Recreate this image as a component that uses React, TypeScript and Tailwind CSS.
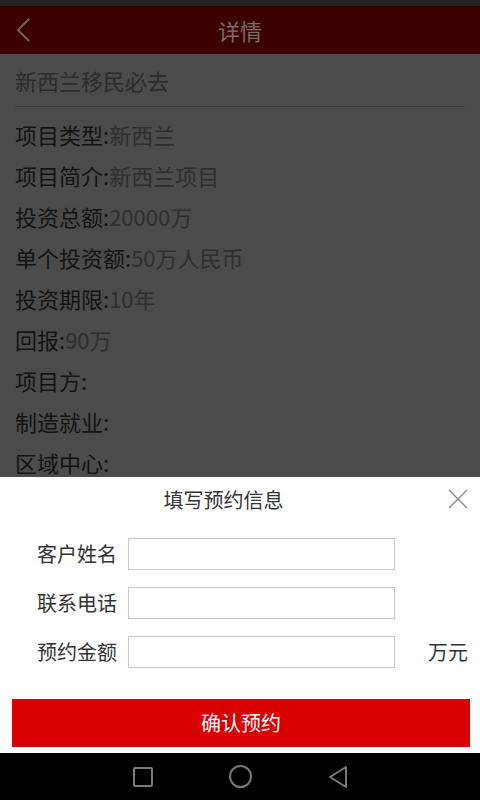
import React from 'react';

const details: { label: string; value: string }[] = [
  { label: '项目类型', value: '新西兰' },
  { label: '项目简介', value: '新西兰项目' },
  { label: '投资总额', value: '20000万' },
  { label: '单个投资额', value: '50万人民币' },
  { label: '投资期限', value: '10年' },
  { label: '回报', value: '90万' },
  { label: '项目方', value: '' },
  { label: '制造就业', value: '' },
  { label: '区域中心', value: '' },
];

const fields = [
  { label: '客户姓名', unit: '' },
  { label: '联系电话', unit: '' },
  { label: '预约金额', unit: '万元' },
];

export default function App() {
  return (
    <div
      className="w-[480px] h-[800px] flex flex-col overflow-hidden bg-white"
      style={{ fontFamily: '"Noto Sans CJK SC", "Noto Sans", sans-serif' }}
    >
      {/* status bar (dimmed) */}
      <div className="h-[6px] bg-[#232323] shrink-0" />

      {/* header (dimmed) */}
      <div className="h-[48px] shrink-0 bg-[#3d0000] flex items-center relative">
        <svg className="absolute left-[16px] top-[12px]" width="16" height="24" viewBox="0 0 16 24">
          <path d="M13 1 L2 12 L13 23" fill="none" stroke="#6f6262" strokeWidth="2" />
        </svg>
        <div className="flex-1 text-center text-[22px] text-[#7b6b6b] leading-none">详情</div>
      </div>

      {/* detail content under the mask */}
      <div className="h-[423px] shrink-0 bg-[#4b4b4b] overflow-hidden">
        <div className="h-[52px] px-[15px] flex items-center text-[22px] text-[#2c2c2c]">
          新西兰移民必去
        </div>
        <div className="mx-[15px] h-px bg-[#3a3a3a]" />
        <div className="pt-[16px] px-[15px] flex flex-col gap-[19px]">
          {details.map((d) => (
            <div key={d.label} className="h-[22px] flex items-center text-[22px] leading-none">
              <span className="text-[#131313]">{d.label}:</span>
              <span className="text-[#2f2f2f]">{d.value}</span>
            </div>
          ))}
        </div>
      </div>

      {/* dialog */}
      <div className="h-[276px] shrink-0 bg-white flex flex-col">
        <div className="h-[46px] relative flex items-center justify-center pr-[33px]">
          <span className="text-[20px] text-[#333]">填写预约信息</span>
          <svg className="absolute left-[448px] top-[12px]" width="20" height="20" viewBox="0 0 20 20">
            <path d="M1 1 L19 19 M19 1 L1 19" stroke="#8a8a8a" strokeWidth="1.4" />
          </svg>
        </div>
        <div className="pt-[15px] flex flex-col gap-[17px]">
          {fields.map((f) => (
            <div key={f.label} className="h-[32px] flex items-center pl-[37px]">
              <span className="w-[80px] text-[20px] text-[#333] leading-none">{f.label}</span>
              <input className="ml-[11px] w-[267px] h-[32px] border border-[#c8c8c8] outline-none" />
              {f.unit && (
                <span className="ml-[33px] text-[20px] text-[#333] leading-none">{f.unit}</span>
              )}
            </div>
          ))}
        </div>
        <div className="mt-[31px] px-[12px]">
          <button className="w-[458px] h-[48px] bg-[#d80000] text-white text-[20px] flex items-center justify-center">
            确认预约
          </button>
        </div>
      </div>

      {/* navigation bar */}
      <div className="flex-1 bg-black flex items-center justify-center">
        <div className="w-[480px] h-full relative">
          <div className="absolute left-[133px] top-[14px] w-[20px] h-[20px] border-2 border-[#7a7a7a] rounded-[2px]" />
          <div className="absolute left-[229px] top-[12px] w-[23px] h-[23px] border-2 border-[#7a7a7a] rounded-full" />
          <svg className="absolute left-[327px] top-[12px]" width="22" height="24" viewBox="0 0 22 24">
            <path d="M19 2 L3 12 L19 22 Z" fill="none" stroke="#7a7a7a" strokeWidth="2" strokeLinejoin="round" />
          </svg>
        </div>
      </div>
    </div>
  );
}
